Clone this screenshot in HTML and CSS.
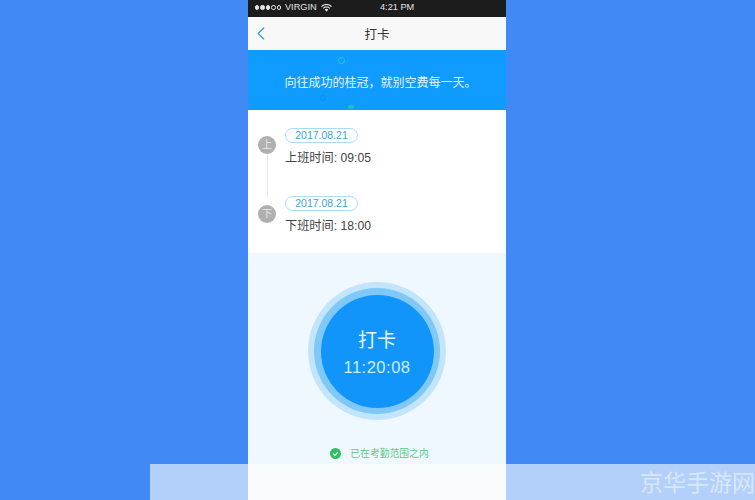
FILE: index.html
```html
<!DOCTYPE html>
<html lang="zh-CN">
<head>
    <meta charset="UTF-8">
    <title>打卡</title>
    <link rel="stylesheet" href="styles.css">
</head>
<body>
    <div class="phone">
        <div class="status">
            <div class="status-left">
                <span class="dots"><i class="on"></i><i class="on"></i><i class="on"></i><i></i><i></i></span>
                <span class="carrier">VIRGIN</span>
                <svg class="wifi" width="11" height="8" viewBox="0 0 11 8"><path d="M0.5 2.6a7 7 0 0 1 10 0M2.2 4.3a4.6 4.6 0 0 1 6.6 0" fill="none" stroke="#e4e4e4" stroke-width="1.2"/><path d="M3.7 5.6a2.5 2.5 0 0 1 3.6 0L5.5 7.7z" fill="#e4e4e4"/></svg>
            </div>
            <span class="clock">4:21 PM</span>
        </div>
        <div class="nav">
            <svg class="back" width="8" height="13" viewBox="0 0 8 13"><path d="M7 0.8L1.2 6.5L7 12.2" fill="none" stroke="#2c9fdc" stroke-width="1.3"/></svg>
            <span class="nav-title">打卡</span>
        </div>
        <div class="banner">
            <i class="ring"></i>
            <i class="ring-dark"></i>
            <i class="spot"></i>
            向往成功的桂冠，就别空费每一天。
        </div>
        <div class="records">
            <div class="record">
                <span class="badge">上</span>
                <div class="record-body">
                    <span class="date">2017.08.21</span>
                    <p class="time">上班时间: 09:05</p>
                </div>
            </div>
            <div class="record">
                <span class="badge badge-low">下</span>
                <div class="record-body">
                    <span class="date">2017.08.21</span>
                    <p class="time">下班时间: 18:00</p>
                </div>
            </div>
        </div>
        <div class="punch">
            <div class="halo">
                <div class="halo-inner">
                    <div class="punch-btn">
                        <span class="punch-label">打卡</span>
                        <span class="punch-time">11:20:08</span>
                    </div>
                </div>
            </div>
            <div class="range">
                <svg width="11" height="11" viewBox="0 0 11 11"><circle cx="5.5" cy="5.5" r="5.5" fill="#2fbf63"/><path d="M3 5.6L4.9 7.4L8 4" fill="none" stroke="#fff" stroke-width="1.2"/></svg>
                <span>已在考勤范围之内</span>
            </div>
        </div>
    </div>
    <div class="watermark">京华手游网</div>
</body>
</html>
```

FILE: styles.css
```css
html, body {
    height: 100%;
}
body {
    margin: 0;
    padding-right: 1px;
    background-color: #418af6;
    font-family: "Liberation Sans", "Noto Sans CJK SC", sans-serif;
    display: flex;
    justify-content: center;
    overflow: hidden;
}
.phone {
    width: 258px;
    height: 500px;
    display: flex;
    flex-direction: column;
    background: #eff8fe;
}
.status {
    height: 17px;
    background: #1c1c1c;
    color: #e4e4e4;
    font-size: 9.2px;
    line-height: 15px;
    display: flex;
    align-items: flex-start;
    position: relative;
    padding-left: 7px;
}
.status-left {
    display: flex;
    align-items: center;
    gap: 4px;
    height: 15px;
}
.dots {
    display: flex;
    gap: 1px;
}
.dots i {
    width: 4.4px;
    height: 4.4px;
    border-radius: 50%;
    border: 1px solid #e4e4e4;
    box-sizing: border-box;
}
.dots i.on {
    background: #e4e4e4;
}
.clock {
    position: absolute;
    left: 132px;
}
.nav {
    height: 33px;
    background: #f8f8f8;
    display: flex;
    align-items: center;
    justify-content: center;
    position: relative;
}
.back {
    position: absolute;
    left: 9px;
    top: 10px;
}
.nav-title {
    font-size: 12.5px;
    color: #333;
}
.banner {
    height: 60px;
    box-sizing: border-box;
    padding: 2px 0 0 7px;
    background: #0f9bff;
    color: #e6f5ff;
    font-size: 12px;
    display: flex;
    align-items: center;
    justify-content: center;
    position: relative;
}
.ring {
    position: absolute;
    left: 90px;
    top: 7px;
    width: 5px;
    height: 5px;
    border: 1px solid #1fd0c8;
    border-radius: 50%;
}
.ring-dark {
    position: absolute;
    left: 72px;
    top: 45px;
    width: 4px;
    height: 4px;
    border: 1px solid #0b90f0;
    border-radius: 50%;
}
.spot {
    position: absolute;
    left: 100px;
    top: 55px;
    width: 6px;
    height: 4px;
    border-radius: 50%;
    background: #1cc2b4;
}
.records {
    height: 143px;
    background: #fff;
    box-sizing: border-box;
    padding-top: 18px;
    display: flex;
    flex-direction: column;
    gap: 21px;
}
.record {
    display: flex;
    height: 47px;
    position: relative;
    padding-left: 10px;
    gap: 9px;
}
.record:first-child::after {
    content: "";
    position: absolute;
    left: 19px;
    top: 26px;
    height: 44px;
    width: 1px;
    background: #e8e8e8;
}
.badge {
    width: 18px;
    height: 18px;
    margin-top: 8px;
    border-radius: 50%;
    background: #b0b0b0;
    color: #e8e8e8;
    font-size: 10px;
    line-height: 18px;
    text-align: center;
}
.badge-low {
    margin-top: 9px;
}
.date {
    display: block;
    box-sizing: border-box;
    width: 73px;
    height: 15px;
    border: 1px solid #a9dcef;
    border-radius: 8px;
    color: #3ea3d6;
    font-size: 10.5px;
    line-height: 13px;
    text-align: center;
}
.time {
    margin: 7px 0 0;
    font-size: 12.2px;
    line-height: 16px;
    color: #444;
}
.punch {
    flex: 1;
    display: flex;
    flex-direction: column;
    align-items: center;
    padding-top: 29px;
}
.halo {
    width: 138px;
    height: 138px;
    border-radius: 50%;
    background: #c3e5fb;
    display: flex;
    align-items: center;
    justify-content: center;
}
.halo-inner {
    width: 126px;
    height: 126px;
    border-radius: 50%;
    background: #7fc8f8;
    display: flex;
    align-items: center;
    justify-content: center;
}
.punch-btn {
    width: 113px;
    height: 113px;
    border-radius: 50%;
    background: #1195fb;
    color: #e8f6ff;
    display: flex;
    flex-direction: column;
    align-items: center;
    justify-content: center;
}
.punch-label {
    font-size: 19px;
    line-height: 24px;
    margin-top: 4px;
}
.punch-time {
    font-size: 16.5px;
    line-height: 20px;
    margin-top: 4px;
    letter-spacing: 0.5px;
    color: #cdeeff;
}
.range {
    margin-top: 26px;
    padding-left: 5px;
    display: flex;
    align-items: center;
    gap: 9px;
    font-size: 9.8px;
    color: #5cc98a;
}
.watermark {
    position: absolute;
    left: 150px;
    right: 0;
    top: 464px;
    height: 36px;
    box-sizing: border-box;
    background: rgba(255, 255, 255, 0.6);
    color: rgba(255, 255, 255, 0.5);
    font-size: 23px;
    line-height: 38px;
    text-align: right;
    white-space: nowrap;
}
```
